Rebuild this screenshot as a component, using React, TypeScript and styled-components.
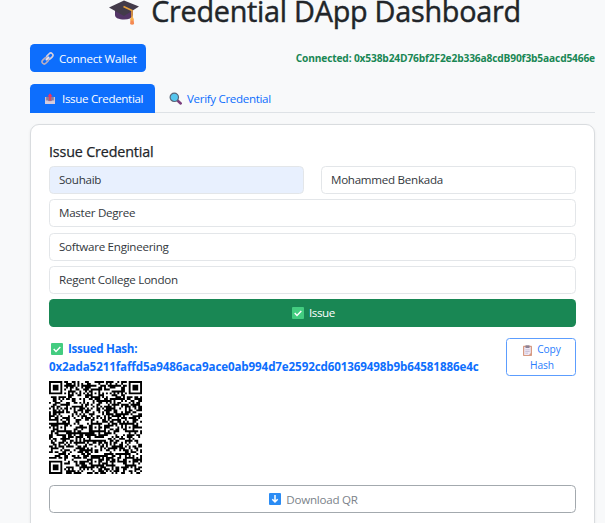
import React from "react";
import styled, { createGlobalStyle } from "styled-components";

const GlobalStyle = createGlobalStyle`
  * { box-sizing: border-box; }
  body {
    margin: 0;
    height: 523px;
    overflow: hidden;
    background: #f8f9fa;
    color: #212529;
    font-family: "Open Sans", "Noto Sans", sans-serif;
    font-size: 11.6px;
  }
  button, input { font: inherit; letter-spacing: inherit; margin: 0; }
`;

const Page = styled.main`
  width: 605px;
  height: 523px;
  overflow: hidden;
  padding: 0 10px 0 30px;
  display: flex;
  flex-direction: column;
  > * { flex: none; }
`;

const Title = styled.h1`
  margin: -8px 0 0;
  padding-left: 5px;
  height: 52px;
  display: flex;
  justify-content: center;
  gap: 12px;
  font-size: 28.8px;
  line-height: 38px;
  font-weight: 500;
  letter-spacing: -0.26px;
  -webkit-text-stroke: 0.45px #212529;
  white-space: nowrap;
  svg { margin-top: 4px; }
`;

const TopBar = styled.div`
  display: flex;
  align-items: center;
  justify-content: space-between;
  height: 28px;
`;

const WalletButton = styled.button`
  width: 116px;
  height: 28px;
  padding: 0 0 0 11px;
  display: flex;
  align-items: center;
  gap: 5px;
  border: 0;
  border-radius: 4.5px;
  background: #0d6efd;
  color: #fff;
  letter-spacing: -0.27px;
  white-space: nowrap;
`;

const Address = styled.span`
  color: #198754;
  font-size: 10.2px;
  font-weight: 700;
  letter-spacing: -0.15px;
  white-space: nowrap;
`;

const Tabs = styled.nav`
  display: flex;
  margin-top: 12px;
  height: 29px;
  border-bottom: 1px solid #dee2e6;
`;

const Tab = styled.button<{ $active?: boolean }>`
  display: flex;
  align-items: center;
  gap: ${(p) => (p.$active ? "6px" : "5px")};
  width: ${(p) => (p.$active ? "125px" : "130px")};
  height: 29px;
  padding: 0 0 0 14px;
  border: 0;
  border-radius: 4.5px 4.5px 0 0;
  background: ${(p) => (p.$active ? "#0d6efd" : "transparent")};
  color: ${(p) => (p.$active ? "#fff" : "#0d6efd")};
  letter-spacing: -0.34px;
  white-space: nowrap;
`;

const Card = styled.section`
  height: 430px;
  margin-top: 11px;
  padding: 17px 18px 0;
  border: 1px solid #d9dcdf;
  border-radius: 9px;
  background: #fff;
  box-shadow: 0 1px 3px rgba(0, 0, 0, 0.07);
`;

const Heading = styled.h2`
  margin: 0;
  height: 24px;
  font-size: 14.3px;
  line-height: 20px;
  font-weight: 500;
  letter-spacing: -0.15px;
  -webkit-text-stroke: 0.25px #212529;
`;

const Form = styled.div`
  display: grid;
  grid-template-columns: 1fr 1fr;
  column-gap: 17px;
  row-gap: 5.3px;
`;

const Field = styled.input<{ $wide?: boolean; $filled?: boolean }>`
  grid-column: ${(p) => (p.$wide ? "1 / -1" : "auto")};
  min-width: 0;
  width: 100%;
  height: 28px;
  padding: 0 9px 1px;
  border: 1px solid #e3e6e9;
  border-radius: 4.5px;
  outline: 0;
  background: ${(p) => (p.$filled ? "#e8f0fe" : "#fff")};
  color: #33383d;
  letter-spacing: -0.27px;
`;

const IssueButton = styled.button`
  grid-column: 1 / -1;
  height: 28px;
  display: flex;
  align-items: center;
  justify-content: center;
  gap: 5px;
  padding: 0 0 1px 2px;
  border: 0;
  border-radius: 4.5px;
  background: #198754;
  color: #fff;
  letter-spacing: -0.4px;
`;

const Result = styled.div`
  display: flex;
  justify-content: space-between;
  margin-top: 11px;
  height: 43px;
`;

const Hash = styled.div`
  margin-top: 2px;
  color: #0d6efd;
  font-weight: 700;
  line-height: 17.4px;
  letter-spacing: -0.115px;
  white-space: nowrap;
`;

const HashLabel = styled.div`
  display: flex;
  align-items: center;
  gap: 5px;
  padding-left: 2px;
  letter-spacing: -0.3px;
`;

const CopyButton = styled.button`
  width: 70px;
  height: 38px;
  padding: 1px 0 0 2px;
  border: 1px solid #5c9dfe;
  border-radius: 3.5px;
  background: #fff;
  color: #2a7dfd;
  font-size: 10.2px;
  line-height: 15.3px;
  letter-spacing: -0.1px;
`;

const CopyLine = styled.span`
  display: flex;
  align-items: center;
  justify-content: center;
  gap: 5px;
`;

const DownloadButton = styled.button`
  width: 100%;
  height: 28px;
  margin-top: 11px;
  display: flex;
  align-items: center;
  justify-content: center;
  gap: 5px;
  padding: 0 0 0 2px;
  border: 1px solid #a3a9ae;
  border-radius: 4.5px;
  background: #fff;
  color: #7b838a;
  letter-spacing: -0.25px;
`;

const QrFrame = styled.svg`
  display: block;
  width: 93px;
  height: 93px;
`;

const CapIcon = () => (
  <svg width="30" height="30" viewBox="0 0 30 30">
    <path d="M6 13v6c0 3 4 4.500 9 4.500s8-1.500 9-4.500v-6z" fill="#533566" />
    <path d="M0 11.500 15 4.500l15 6L15 20z" fill="#433b4a" />
    <path d="M14.500 10.500 23 14.500v9" fill="none" stroke="#e9a13b" strokeWidth="1.600" />
    <path d="M21.500 23h3l.600 5q-2 1.500-4 0z" fill="#f58a52" />
    <circle cx="23" cy="23" r="1.700" fill="#f9b14b" />
  </svg>
);

const LinkIcon = () => (
  <svg width="13" height="13" viewBox="0 0 13 13" fill="none" strokeWidth="1.600">
    <rect x="5.300" y="2" width="7" height="4.400" rx="2.200" transform="rotate(-45 8.800 4.200)" stroke="#d8d0dd" />
    <rect x=".7" y="6.600" width="7" height="4.400" rx="2.200" transform="rotate(-45 4.200 8.800)" stroke="#b9adc0" />
    <path d="m4.800 8.200 3.400-3.400" stroke="#eee6ee" />
  </svg>
);

const OutboxIcon = () => (
  <svg width="12" height="12" viewBox="0 0 12 12">
    <path d="M1 4h10v6.500q0 .5-.5.500h-9Q1 11 1 10.500z" fill="#c9bdcf" />
    <path d="M2.200 4h7.600v4H2.200z" fill="#8b7b99" />
    <path d="M1 7.500h3l.7 1.300h2.600L8 7.500h3V11H1z" fill="#d5cbdc" />
    <path d="M6 .3 8.500 3.500H6.800V7.500H5.200V3.500H3.500z" fill="#f8315a" />
  </svg>
);

const SearchIcon = () => (
  <svg width="13" height="13" viewBox="0 0 13 13">
    <path d="m8 8 3.700 3.500" stroke="#7b3e7d" strokeWidth="2.500" strokeLinecap="round" />
    <circle cx="5.300" cy="5.300" r="4.200" fill="#55c6ee" stroke="#596577" strokeWidth="1.200" />
  </svg>
);

const CheckIcon = () => (
  <svg width="12" height="12" viewBox="0 0 12 12">
    <rect width="12" height="12" rx="1" fill="#43cc80" />
    <path d="m2.700 6 2.300 2.400 4.300-4.500" fill="none" stroke="#fff" strokeWidth="1.400" />
  </svg>
);

const ClipboardIcon = () => (
  <svg width="9" height="11" viewBox="0 0 9 11">
    <rect y=".8" width="9" height="10.200" rx=".7" fill="#d79a82" />
    <path d="M1.200 2h6.600v6L6 10H1.200z" fill="#eee7f5" />
    <path d="M2.500.3h4V3h-4z" fill="#8d8295" />
    <path d="M2.300 4.800h4.400M2.300 6.500h4.400M2.300 8.200H5" stroke="#b5abc5" strokeWidth=".6" />
  </svg>
);

const DownIcon = () => (
  <svg width="12" height="12" viewBox="0 0 12 12">
    <rect width="12" height="12" rx="1" fill="#2b8cf4" />
    <path d="M6 2v7M3.300 6.300 6 9l2.700-2.700" fill="none" stroke="#fff" strokeWidth="1.500" />
  </svg>
);

const SIZE = 49;

/** Modules of a version 8 symbol: finders, timing, alignment marks and data. */
function buildModules(): boolean[][] {
  let seed = 90137;
  const next = () => {
    seed = (seed * 1103515245 + 12345) % 2147483648;
    return seed / 2147483648;
  };
  const grid = Array.from({ length: SIZE }, () =>
    Array.from({ length: SIZE }, () => next() > 0.46)
  );
  const mark = (cx: number, cy: number, radius: number, light: number[]) => {
    for (let y = cy - radius; y <= cy + radius; y++) {
      for (let x = cx - radius; x <= cx + radius; x++) {
        if (x < 0 || y < 0 || x >= SIZE || y >= SIZE) continue;
        const ring = Math.max(Math.abs(x - cx), Math.abs(y - cy));
        grid[y][x] = !light.includes(ring);
      }
    }
  };
  for (let i = 8; i < SIZE - 8; i++) {
    grid[6][i] = i % 2 === 0;
    grid[i][6] = i % 2 === 0;
  }
  [[24, 6], [6, 24], [24, 24], [42, 24], [24, 42], [42, 42]].forEach(([x, y]) => mark(x, y, 2, [1]));
  [[3, 3], [SIZE - 4, 3], [3, SIZE - 4]].forEach(([x, y]) => mark(x, y, 4, [2, 4]));
  return grid;
}

const qrPath = buildModules()
  .map((row, y) => row.map((on, x) => (on ? `M${x} ${y}h1v1h-1z` : "")).join(""))
  .join("");

const QrCode = () => (
  <QrFrame viewBox={`0 0 ${SIZE} ${SIZE}`}>
    <path d={qrPath} fill="#000" />
  </QrFrame>
);

export default function App() {
  return (
    <>
      <GlobalStyle />
      <Page>
        <Title><CapIcon />Credential DApp Dashboard</Title>
        <TopBar>
          <WalletButton><LinkIcon />Connect Wallet</WalletButton>
          <Address>Connected: 0x538b24D76bf2F2e2b336a8cdB90f3b5aacd5466e</Address>
        </TopBar>
        <Tabs>
          <Tab $active><OutboxIcon />Issue Credential</Tab>
          <Tab><SearchIcon />Verify Credential</Tab>
        </Tabs>
        <Card>
          <Heading>Issue Credential</Heading>
          <Form>
            <Field $filled defaultValue="Souhaib" />
            <Field defaultValue="Mohammed Benkada" />
            <Field $wide defaultValue="Master Degree" />
            <Field $wide defaultValue="Software Engineering" />
            <Field $wide defaultValue="Regent College London" />
            <IssueButton><CheckIcon />Issue</IssueButton>
          </Form>
          <Result>
            <Hash>
              <HashLabel><CheckIcon />Issued Hash:</HashLabel>
              0x2ada5211faffd5a9486aca9ace0ab994d7e2592cd601369498b9b64581886e4c
            </Hash>
            <CopyButton>
              <CopyLine><ClipboardIcon />Copy</CopyLine>
              <CopyLine>Hash</CopyLine>
            </CopyButton>
          </Result>
          <QrCode />
          <DownloadButton><DownIcon />Download QR</DownloadButton>
        </Card>
      </Page>
    </>
  );
}
